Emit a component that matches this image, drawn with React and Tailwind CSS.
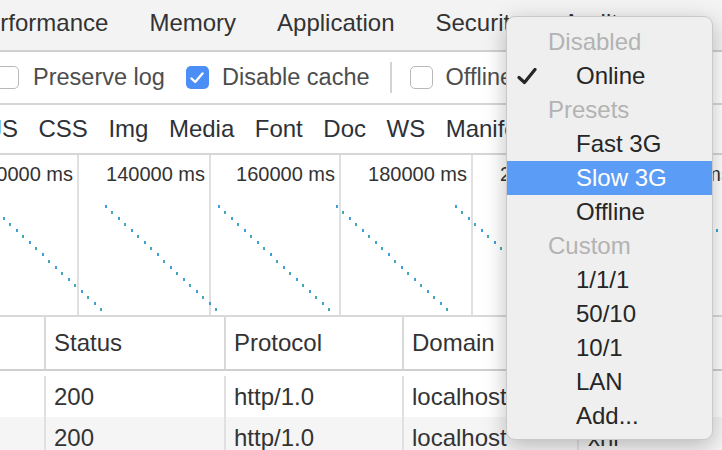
import React from "react";

const tabs = ["Performance", "Memory", "Application", "Security", "Audits"];
const filters = ["JS", "CSS", "Img", "Media", "Font", "Doc", "WS", "Manifest", "Other"];
const cols = [
  { w: "w-[132px]", label: "120000 ms" },
  { w: "w-[132px]", label: "140000 ms" },
  { w: "w-[130px]", label: "160000 ms" },
  { w: "w-[132px]", label: "180000 ms" },
  { w: "w-[132px]", label: "200000 ms" },
  { w: "w-[132px]", label: "220000 ms" },
];

function Dots() {
  const starts = [-10, 105, 218, 336, 455, 574, 690];
  const rects = [];
  starts.forEach((sx, si) => {
    for (let i = 0; i < 18; i++) {
      const x = sx + (i * 110) / 17;
      const y = 50 + (i * 103) / 17;
      rects.push(
        <rect
          key={si + "-" + i}
          x={Math.round(x)}
          y={Math.round(y)}
          width="2"
          height="3"
          fill={i % 2 === 0 ? "#3f9fdc" : "#45a8b6"}
        />
      );
    }
  });
  return (
    <svg className="absolute left-0 top-0" width="722" height="160" viewBox="0 0 722 160">
      {rects}
    </svg>
  );
}

function Box({ checked }) {
  if (checked) {
    return (
      <div className="w-[23px] h-[23px] rounded-[5px] bg-[#4b8ef5] flex items-center justify-center shrink-0">
        <svg width="14" height="12" viewBox="0 0 14 12">
          <path d="M1.5 6.5 L5.2 10 L12.5 1.5" stroke="#fff" strokeWidth="2.4" fill="none" strokeLinecap="round" strokeLinejoin="round" />
        </svg>
      </div>
    );
  }
  return <div className="w-[23px] h-[23px] rounded-[5px] border-[1.5px] border-[#b8b8b8] bg-white shrink-0" />;
}

const menuItems = [
  { t: "Disabled", h: true },
  { t: "Online", c: true },
  { t: "Presets", h: true },
  { t: "Fast 3G" },
  { t: "Slow 3G", s: true },
  { t: "Offline" },
  { t: "Custom", h: true },
  { t: "1/1/1" },
  { t: "50/10" },
  { t: "10/1" },
  { t: "LAN" },
  { t: "Add..." },
];

export default function App() {
  return (
    <div className="relative w-[722px] h-[450px] overflow-hidden bg-white font-['Liberation_Sans',Arial,sans-serif] text-[24px]">
      {/* tab bar */}
      <div className="h-[52px] bg-[#f3f3f3] border-b-2 border-[#d0d0d0] flex items-center gap-[41px] whitespace-nowrap text-[#333] pb-[4px]">
        {tabs.map((t, i) => (
          <span key={t} className={i === 0 ? "ml-[-29px]" : ""}>{t}</span>
        ))}
      </div>

      {/* toolbar */}
      <div className="h-[53px] border-b-2 border-[#d6d6d6] flex items-center whitespace-nowrap text-[#4d4d4d] text-[23.5px]">
        <div className="ml-[-4px]"><Box /></div>
        <span className="ml-[14px]">Preserve log</span>
        <div className="ml-[21px]"><Box checked /></div>
        <span className="ml-[13px]">Disable cache</span>
        <div className="ml-[20px] w-[2px] h-[31px] bg-[#d3d3d3]" />
        <div className="ml-[18px]"><Box /></div>
        <span className="ml-[13px]">Offline</span>
      </div>

      {/* filter row */}
      <div className="h-[50px] border-b-2 border-[#d6d6d6] flex items-center gap-[20.5px] whitespace-nowrap text-[#2d3239]">
        {filters.map((f, i) => (
          <span key={f} className={i === 0 ? "ml-[-10px]" : ""}>{f}</span>
        ))}
      </div>

      {/* timeline overview */}
      <div className="relative h-[162px] border-b-2 border-[#d9d9d9] flex">
        <div className="flex ml-[-53px] shrink-0">
          {cols.map((c) => (
            <div key={c.label} className={`${c.w} h-full border-r-2 border-[#e0e0e0] flex justify-end pr-[4px] pt-[9px] shrink-0`}>
              <span className="text-[20px] leading-[20px] text-[#333] whitespace-nowrap">{c.label}</span>
            </div>
          ))}
        </div>
        <Dots />
      </div>

      {/* table header */}
      <div className="h-[54px] border-b-2 border-[#cfcfcf] flex items-stretch whitespace-nowrap text-[#333]">
        <div className="w-[46px] border-r-2 border-[#d9d9d9] shrink-0" />
        <div className="w-[180px] border-r-2 border-[#d9d9d9] flex items-center pl-[8px] shrink-0">Status</div>
        <div className="w-[178px] border-r-2 border-[#d9d9d9] flex items-center pl-[8px] shrink-0">Protocol</div>
        <div className="w-[175px] border-r-2 border-[#d9d9d9] flex items-center pl-[8px] shrink-0 overflow-hidden">Domain</div>
        <div className="flex-1 flex items-center pl-[8px]">Type</div>
      </div>

      {/* rows */}
      {[0, 1].map((r) => (
        <div
          key={r}
          className={`${r === 0 ? "h-[46px] pt-[5px] bg-white" : "h-[41px] bg-[#f5f5f5]"} flex items-stretch whitespace-nowrap text-[#333]`}
        >
          <div className="w-[46px] border-r-2 border-[#e0e0e0] shrink-0" />
          <div className="w-[180px] border-r-2 border-[#e0e0e0] flex items-center pl-[8px] shrink-0">200</div>
          <div className="w-[178px] border-r-2 border-[#e0e0e0] flex items-center pl-[8px] shrink-0">http/1.0</div>
          <div className="w-[175px] border-r-2 border-[#e0e0e0] flex items-center pl-[8px] shrink-0 overflow-hidden">localhost</div>
          <div className="flex-1 flex items-center pl-[9px]">xhr</div>
        </div>
      ))}

      {/* dropdown menu */}
      <div className="absolute left-[506px] top-[16px] w-[207px] h-[424px] rounded-[9px] bg-[#efefef] border border-[#c9c9c9] shadow-[0_6px_22px_rgba(0,0,0,0.25)] py-[8px] whitespace-nowrap overflow-hidden">
        {menuItems.map((m) => (
          <div
            key={m.t}
            className={`relative h-[34px] flex items-center ${m.s ? "bg-[#5b9cf6] text-white" : m.h ? "text-[#b3b3b3]" : "text-[#262626]"} ${m.h ? "pl-[41px]" : "pl-[69px]"}`}
          >
            {m.c && (
              <svg className="absolute left-[10px] top-[9px]" width="20" height="17" viewBox="0 0 20 17">
                <path d="M2 9.5 L7.5 14.5 L18 1.5" stroke="#262626" strokeWidth="3.2" fill="none" strokeLinecap="round" strokeLinejoin="round" />
              </svg>
            )}
            {m.t}
          </div>
        ))}
      </div>
    </div>
  );
}
